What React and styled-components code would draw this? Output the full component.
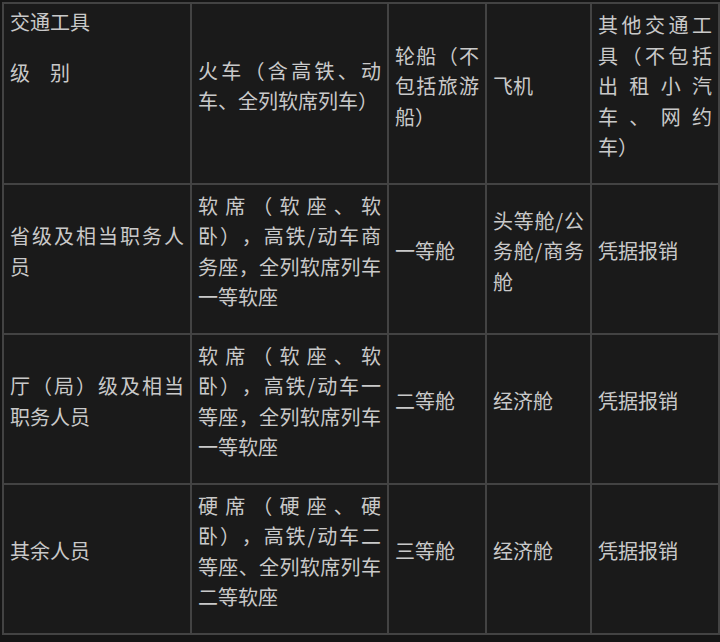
import React from "react";
import styled, { createGlobalStyle } from "styled-components";

const GlobalStyle = createGlobalStyle`
  html, body {
    margin: 0;
    padding: 0;
    background: #151515;
  }
  body {
    font-family: "Noto Sans CJK SC", "Noto Sans", sans-serif;
  }
`;

const Page = styled.div`
  padding: 2px;
`;

const Table = styled.table`
  width: 716px;
  table-layout: fixed;
  border-collapse: collapse;
  background: #1a1a1a;
  color: #c9c9c9;
  font-size: 20px;
  line-height: 30.5px;
  text-spacing-trim: space-all;
`;

const Cell = styled.td`
  border: 2px solid #434343;
  padding: 6px 6px 20px;
  text-align: justify;
  vertical-align: ${(p) => (p.$top ? "top" : "middle")};
  text-spacing-trim: space-all;
`;

const Label = styled.p`
  margin: ${(p) => (p.$first ? "-3px 0 20px" : "0")};
`;

const columns = [188, 197, 98, 105, 128];

const rows = [
  {
    level: "省级及相当职务人员",
    train: "软席（软座、软卧），高铁/动车商务座，全列软席列车一等软座",
    ship: "一等舱",
    plane: "头等舱/公务舱/商务舱",
    other: "凭据报销",
  },
  {
    level: "厅（局）级及相当职务人员",
    train: "软席（软座、软卧），高铁/动车一等座，全列软席列车一等软座",
    ship: "二等舱",
    plane: "经济舱",
    other: "凭据报销",
  },
  {
    level: "其余人员",
    train: "硬席（硬座、硬卧），高铁/动车二等座、全列软席列车二等软座",
    ship: "三等舱",
    plane: "经济舱",
    other: "凭据报销",
  },
];

const App = () => {
  return (
    <Page>
      <GlobalStyle />
      <Table>
        <colgroup>
          {columns.map((w, i) => (
            <col key={i} style={{ width: w }} />
          ))}
        </colgroup>
        <tbody>
          <tr>
            <Cell $top>
              <Label $first>交通工具</Label>
              <Label>级　别</Label>
            </Cell>
            <Cell>火车（含高铁、动车、全列软席列车）</Cell>
            <Cell>轮船（不包括旅游船）</Cell>
            <Cell>飞机</Cell>
            <Cell>其他交通工具（不包括出租小汽车、网约车）</Cell>
          </tr>
          {rows.map((row) => (
            <tr key={row.level}>
              <Cell>{row.level}</Cell>
              <Cell>{row.train}</Cell>
              <Cell>{row.ship}</Cell>
              <Cell>{row.plane}</Cell>
              <Cell>{row.other}</Cell>
            </tr>
          ))}
        </tbody>
      </Table>
    </Page>
  );
};

export default App;
